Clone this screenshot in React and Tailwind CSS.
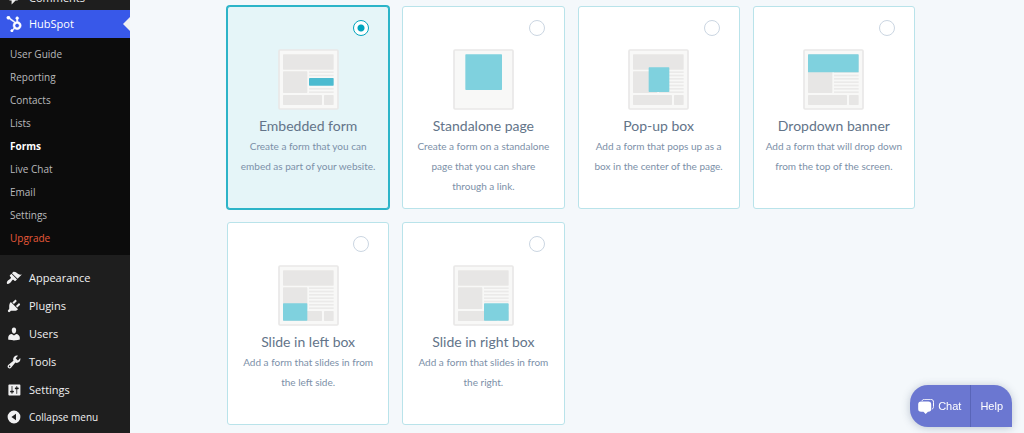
import { useState } from "react";
import { FaHubspot } from "react-icons/fa";

const ICONS = {
  appearance:
    "M14.48 11.06L7.41 3.99l1.5-1.5c.5-.56 2.3-.47 3.51.32 1.21.8 1.43 1.28 2.91 2.1 1.18.64 2.45 1.26 4.45.85zm-.71.71L6.7 4.7 4.93 6.47c-.39.39-.39 1.02 0 1.41l1.06 1.06c.39.39.39 1.03 0 1.42-.6.6-1.43 1.11-2.21 1.69-.35.26-.7.53-1.01.84C1.43 14.23.4 16.08 1.4 17.07c.99 1 2.84-.03 4.18-1.36.31-.31.58-.66.85-1.02.57-.78 1.08-1.61 1.69-2.21.39-.39 1.02-.39 1.41 0l1.06 1.06c.39.39 1.02.39 1.41 0z",
  plugins:
    "M13.11 4.36L9.87 7.6 8 5.73l3.24-3.24c.35-.34 1.05-.2 1.56.32.52.51.66 1.21.31 1.55zm-8 1.77l.91-1.12 9.01 9.01-1.19.84c-.71.71-2.63 1.16-3.82 1.16H6.14L4.9 17.26c-.59.59-1.54.59-2.12 0-.59-.58-.59-1.53 0-2.12l1.24-1.24v-3.88c0-1.13.4-3.19 1.09-3.89zm7.26 3.97l3.24-3.24c.34-.35 1.04-.21 1.55.31.52.51.66 1.21.31 1.55l-3.24 3.25z",
  users:
    "M10 9.25c-2.27 0-2.73-3.44-2.73-3.44C7 4.02 7.82 2 9.97 2c2.16 0 2.98 2.02 2.71 3.81 0 0-.41 3.44-2.68 3.44zm0 2.57L12.72 10c2.39 0 4.52 2.33 4.52 4.53v2.49s-3.65 1.13-7.24 1.13c-3.65 0-7.24-1.13-7.24-1.13v-2.49c0-2.25 1.94-4.48 4.47-4.48z",
  tools:
    "M16.68 9.77c-1.34 1.34-3.3 1.67-4.95.99l-5.41 6.52c-.99.99-2.59.99-3.58 0s-.99-2.59 0-3.57l6.52-5.42c-.68-1.65-.35-3.61.99-4.95 1.28-1.28 3.12-1.62 4.72-1.06l-2.89 2.89 2.82 2.82 2.86-2.87c.53 1.58.18 3.39-1.08 4.65zM3.81 16.21c.4.39 1.04.39 1.43 0 .4-.4.4-1.04 0-1.43-.39-.4-1.03-.4-1.43 0-.39.39-.39 1.03 0 1.43z",
  settings:
    "M18 16V4c0-.55-.45-1-1-1H4c-.55 0-1 .45-1 1v12c0 .55.45 1 1 1h13c.55 0 1-.45 1-1zM8 11h1c.55 0 1 .45 1 1s-.45 1-1 1H8v1.5c0 .28-.22.5-.5.5s-.5-.22-.5-.5V13H6c-.55 0-1-.45-1-1s.45-1 1-1h1V5.5c0-.28.22-.5.5-.5s.5.22.5.5V11zm5-2h-1c-.55 0-1-.45-1-1s.45-1 1-1h1V5.5c0-.28.22-.5.5-.5s.5.22.5.5V7h1c.55 0 1 .45 1 1s-.45 1-1 1h-1v5.5c0 .28-.22.5-.5.5s-.5-.22-.5-.5V9z",
  collapse:
    "M10 2a8 8 0 1 0 0 16 8 8 0 0 0 0-16zM12.5 5.8v8.4L6.8 10z",
  comments:
    "M5 2h9c1.1 0 2 .9 2 2v7c0 1.1-.9 2-2 2h-2l-5 5v-5H5c-1.1 0-2-.9-2-2V4c0-1.1.9-2 2-2z",
};

function MenuIcon({ name }) {
  return (
    <svg viewBox="0 0 20 20" className="size-4 shrink-0" fill="#f0f0f1" fillRule="evenodd" aria-hidden="true">
      <path d={ICONS[name]} />
    </svg>
  );
}

const SUBMENU = ["User Guide", "Reporting", "Contacts", "Lists", "Forms", "Live Chat", "Email", "Settings", "Upgrade"];

const MENU = [
  ["appearance", "Appearance"],
  ["plugins", "Plugins"],
  ["users", "Users"],
  ["tools", "Tools"],
  ["settings", "Settings"],
];

function submenuStyle(item) {
  if (item === "Forms") return "font-bold text-white";
  if (item === "Upgrade") return "text-[#e8593a]";
  return "text-[#b9babc]";
}

function Sidebar() {
  return (
    <nav
      aria-label="Admin menu"
      className="flex w-[130px] shrink-0 flex-col bg-[#1e1e1e] font-['Open_Sans','Noto_Sans',sans-serif] text-[11px] leading-4 text-[#f0f0f1]"
    >
      <a href="#comments" className="-mt-[14px] flex h-6 items-center gap-[7px] pl-[6px]">
        <MenuIcon name="comments" />
        Comments
      </a>
      <a href="#hubspot" className="relative flex h-7 items-center gap-[7px] bg-[#3858e9] pl-[6px] text-white">
        <FaHubspot className="size-4 shrink-0" stroke="currentColor" strokeWidth="16" aria-hidden="true" />
        HubSpot
        <svg viewBox="0 0 7 14" className="absolute right-0 h-3.5 w-[7px]" fill="#f0f0f1" aria-hidden="true">
          <path d="M7 0v14L0 7z" />
        </svg>
      </a>
      <ul className="flex flex-col bg-[#0c0c0c] pt-1 pb-[6px] text-[10px]">
        {SUBMENU.map((item) => (
          <li key={item}>
            <a href="#submenu" className={`flex h-[23px] items-center pl-[10px] ${submenuStyle(item)}`}>
              {item}
            </a>
          </li>
        ))}
      </ul>
      <ul className="flex flex-col pt-[9px]">
        {MENU.map(([icon, label]) => (
          <li key={icon}>
            <a href="#menu" className="flex h-7 items-center gap-[7px] pl-[6px]">
              <MenuIcon name={icon} />
              {label}
            </a>
          </li>
        ))}
      </ul>
      <button type="button" className="flex h-[26px] items-center gap-[7px] pl-[6px] text-left text-[10px]">
        <MenuIcon name="collapse" />
        Collapse menu
      </button>
    </nav>
  );
}

const OVERLAYS = {
  embedded: [93, 87, 74, 23],
  standalone: [37, 16, 110, 107],
  popup: [62, 55, 62, 74],
  dropdown: [15, 16, 152, 54],
  left: [15, 115, 73, 52],
  right: [93, 115, 74, 52],
};

function Thumbnail({ kind }) {
  const [x, y, width, height] = OVERLAYS[kind];
  return (
    <svg viewBox="0 0 183 183" className="block size-[61px]" aria-hidden="true">
      <rect x="3" y="3" width="177" height="177" rx="3" fill="#f8f8f7" stroke="#e9e8e7" strokeWidth="5" />
      {kind !== "standalone" && (
        <g fill="#e7e6e5">
          <rect x="15" y="16" width="152" height="46" rx="2" />
          <rect x="15" y="67" width="73" height="65" rx="2" />
          {[67, 77, 87, 97, 107, 117, 127].map((top) => (
            <rect key={top} x="93" y={top} width="74" height="5" fill="#ebeae9" />
          ))}
          <rect x="15" y="138" width="117" height="30" rx="2" />
          <rect x="138" y="138" width="29" height="30" rx="2" />
        </g>
      )}
      {kind === "embedded" && <rect x="93" y="83" width="74" height="33" fill="#f8f8f7" />}
      <rect x={x} y={y} width={width} height={height} rx="2" fill={kind === "embedded" ? "#4cbbd0" : "#7fd1de"} />
    </svg>
  );
}

const FORM_TYPES = [
  ["embedded", "Embedded form", "Create a form that you can embed as part of your website."],
  ["standalone", "Standalone page", "Create a form on a standalone page that you can share through a link."],
  ["popup", "Pop-up box", "Add a form that pops up as a box in the center of the page."],
  ["dropdown", "Dropdown banner", "Add a form that will drop down from the top of the screen."],
  ["left", "Slide in left box", "Add a form that slides in from the left side."],
  ["right", "Slide in right box", "Add a form that slides in from the right."],
];

function FormCard({ kind, title, description, checked, onSelect }) {
  return (
    <label
      className={`flex min-h-[203px] cursor-pointer flex-col items-center rounded-[3px] border px-[10px] pt-[13px] pb-2 text-center ${
        checked ? "border-[#2cb4c8] bg-[#e5f5f8] ring-1 ring-[#2cb4c8]" : "border-[#b9e3ea] bg-white"
      }`}
    >
      <input
        type="radio"
        name="form-type"
        value={kind}
        checked={checked}
        onChange={onSelect}
        className="mr-[9px] size-4 appearance-none self-end rounded-full border border-[#cbd6e2] bg-white checked:border-[#00a4bd] checked:bg-[radial-gradient(circle,#00a4bd_0_3px,#fff_4px)]"
      />
      <span className="mt-[13px]">
        <Thumbnail kind={kind} />
      </span>
      <span className="mt-[6px] text-sm leading-5 text-[#637489]">{title}</span>
      <span className="text-[10px] leading-5 text-[#7c90a8]">{description}</span>
    </label>
  );
}

function ChatIcon() {
  return (
    <svg viewBox="0 0 48 46" className="h-[15px] w-4" aria-hidden="true">
      <path
        d="M12 5c2-3 4-4 8-4h18c6 0 9 3 9 9v13c0 4-1 6-4 8"
        fill="none"
        stroke="#fff"
        strokeWidth="3"
        strokeLinecap="round"
      />
      <path d="M9 8h22c6 0 9 3 9 9v14c0 6-3 8-9 8h-1l-7 7-7-7H9c-6 0-9-2-9-8V17c0-6 3-9 9-9z" fill="#fff" />
    </svg>
  );
}

export default function App() {
  const [selected, setSelected] = useState("embedded");
  return (
    <div className="flex min-h-screen bg-[#f4f8fb]">
      <Sidebar />
      <main className="min-w-0 flex-1 pt-[6px] pr-[109px] pb-2 pl-[97px] font-[Lato,sans-serif]">
        <div role="radiogroup" aria-label="Form type" className="grid grid-cols-4 gap-[13px]">
          {FORM_TYPES.map(([kind, title, description]) => (
            <FormCard
              key={kind}
              kind={kind}
              title={title}
              description={description}
              checked={selected === kind}
              onSelect={() => setSelected(kind)}
            />
          ))}
        </div>
      </main>
      <div className="fixed right-3 bottom-[6px] flex h-[42px] overflow-hidden rounded-[18px] rounded-br-none bg-[#6b77d1] font-['Liberation_Sans',Arial,sans-serif] text-[11px] text-white shadow-[0_1px_8px_rgba(60,80,110,0.3)]">
        <button type="button" className="flex items-center gap-1 pr-[9px] pl-2">
          <ChatIcon />
          Chat
        </button>
        <button type="button" className="border-l border-[#5965b8] px-[9px]">
          Help
        </button>
      </div>
    </div>
  );
}
